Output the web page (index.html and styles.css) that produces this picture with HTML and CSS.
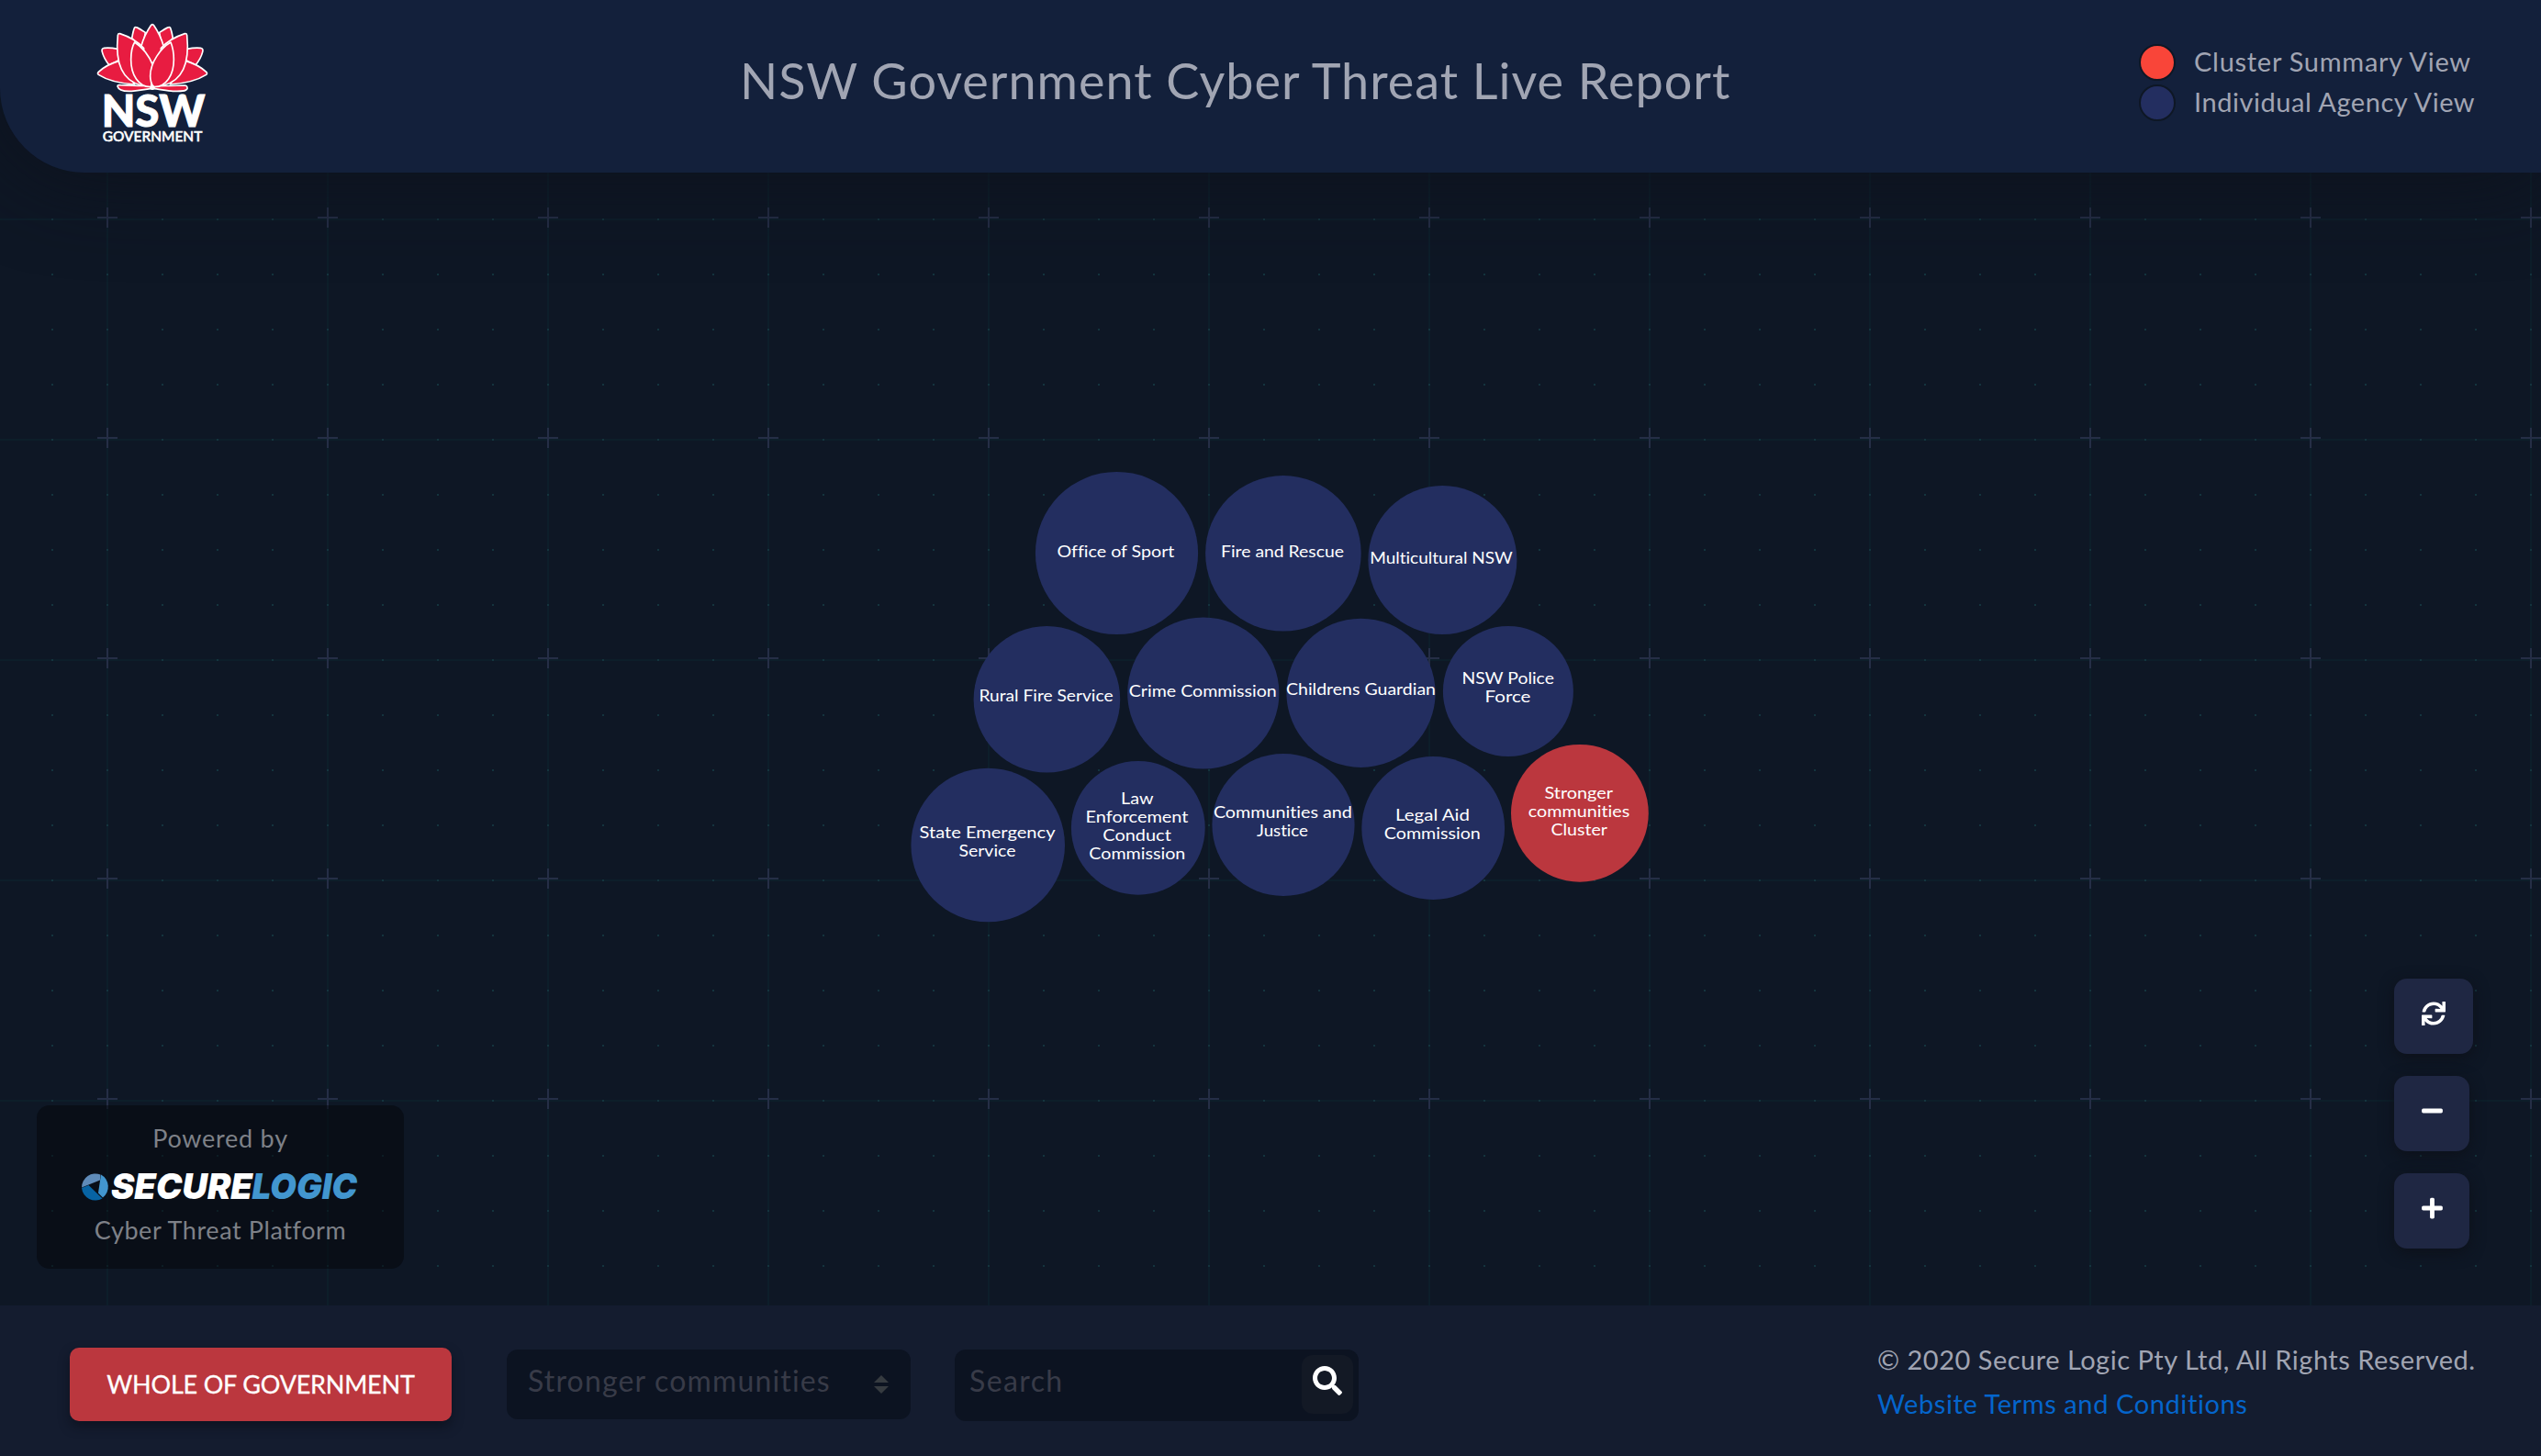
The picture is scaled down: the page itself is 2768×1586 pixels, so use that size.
FILE: index.html
```html
<!DOCTYPE html>
<html lang="en">
<head>
<meta charset="utf-8">
<title>NSW Government Cyber Threat Live Report</title>
<link rel="stylesheet" href="styles.css">
</head>
<body>
<div class="page">
  <header class="header">
    <svg class="crest" viewBox="315 75 366 390" role="img" aria-label="NSW Government">
      <g class="petals">
        <path d="M384 282C388 298 410 299 430 298C460 296 475 291 498 289C521 291 545 297 565 298C590 299 608 299 612 290C613 283 610 279 602 279Q500 284 394 278C387 277 384 279 384 282Z"/>
        <path d="M385 160C365 156 350 156 340 157C333 158 332 163 334 170C339 190 348 202 357 213L390 196Z"/>
        <path d="M611 160C631 156 646 156 656 157C663 158 664 163 662 170C657 190 648 202 639 213L606 196Z"/>
        <path d="M431 125C434 108 437 95 440 90C443 86 449 89 475 106L465 160Z"/>
        <path d="M565 125C562 108 559 95 556 90C553 86 547 89 521 106L531 160Z"/>
        <path d="M498 210L461 152C469 124 483 98 494 82Q498 78 502 82C513 98 527 124 535 152Z"/>
        <path d="M440 276C400 273 350 262 322 244Q317 240 322 235C340 218 365 206 390 199Z"/>
        <path d="M556 276C596 273 646 262 674 244Q679 240 674 235C656 218 631 206 606 199Z"/>
        <path d="M462 279C405 265 375 215 385 115Q386 109 392 110C430 122 452 138 470 158Z"/>
        <path d="M534 279C591 265 621 215 611 115Q610 109 604 110C566 122 544 138 526 158Z"/>
        <path d="M494 284C452 286 428 243 428 195C428 170 434 148 440 138C466 155 488 185 499 212Z"/>
        <path d="M502 284C544 286 568 243 568 195C568 170 562 148 558 138C525 157 491 205 491 248C491 264 496 276 502 284Z"/>
      </g>
      <circle class="petal-knot" cx="498" cy="286" r="8"/>
      <text class="crest-nsw" x="332" y="413" textLength="338" lengthAdjust="spacingAndGlyphs">NSW</text>
      <text class="crest-gov" x="335" y="461" textLength="326" lengthAdjust="spacingAndGlyphs">GOVERNMENT</text>
    </svg>
    <h1 class="title">NSW Government Cyber Threat Live Report</h1>
    <ul class="legend">
      <li class="legend-row"><span class="dot dot-cluster"></span><span class="legend-cluster">Cluster Summary View</span></li>
      <li class="legend-row"><span class="dot dot-agency"></span><span class="legend-agency">Individual Agency View</span></li>
    </ul>
  </header>

  <main class="map">
    <svg class="canvas" viewBox="0 188 2768 1234">
      <defs>
        <pattern id="grid" x="57" y="179" width="240" height="240" patternUnits="userSpaceOnUse">
          <path class="grid-line" d="M59 0h2v240h-2zM0 59h240v2H0z"/>
          <path class="grid-dot" d="M119 59h2v2h-2zM179 59h2v2h-2zM239 59h1v2h-1zM0 59h1v2H0zM59 119h2v2h-2zM59 179h2v2h-2zM59 239h2v1h-2zM59 0h2v1h-2zM119 119h2v2h-2zM119 179h2v2h-2zM179 119h2v2h-2zM179 179h2v2h-2zM239 119h1v2h-1zM0 119h1v2H0zM239 179h1v2h-1zM0 179h1v2H0zM119 239h2v1h-2zM119 0h2v1h-2zM179 239h2v1h-2zM179 0h2v1h-2zM239 239h1v1h-1zM0 0h1v1H0zM239 0h1v1h-1zM0 239h1v1H0z"/>
          <path class="grid-plus" d="M59 47h2v22h-2zM49 57h22v2H49z"/>
        </pattern>
      </defs>
      <rect x="0" y="188" width="2768" height="1234" fill="url(#grid)"/>
      <g class="agencies">
        <circle cx="1216.5" cy="602.5" r="88.6"/>
        <circle cx="1397.9" cy="602.8" r="84.8"/>
        <circle cx="1571.4" cy="610" r="81"/>
        <circle cx="1140.4" cy="761.8" r="79.8"/>
        <circle cx="1310.8" cy="755" r="82.6"/>
        <circle cx="1482.5" cy="754.8" r="81.1"/>
        <circle cx="1642.9" cy="753" r="71"/>
        <circle cx="1076.2" cy="920.5" r="83.8"/>
        <circle cx="1239.8" cy="901.8" r="72.9"/>
        <circle cx="1398" cy="898.5" r="77.6"/>
        <circle cx="1561.2" cy="902" r="77.9"/>
      </g>
      <circle class="cluster" cx="1720.9" cy="885.8" r="74.9"/>
      <g class="labels">
        <text x="1151.4" y="607" textLength="128" lengthAdjust="spacingAndGlyphs">Office of Sport</text>
        <text x="1330" y="607" textLength="134" lengthAdjust="spacingAndGlyphs">Fire and Rescue</text>
        <text x="1492.2" y="614" textLength="155.5" lengthAdjust="spacingAndGlyphs">Multicultural NSW</text>
        <text x="1066.5" y="764" textLength="146" lengthAdjust="spacingAndGlyphs">Rural Fire Service</text>
        <text x="1229.8" y="759" textLength="161" lengthAdjust="spacingAndGlyphs">Crime Commission</text>
        <text x="1401" y="757" textLength="163" lengthAdjust="spacingAndGlyphs">Childrens Guardian</text>
        <text x="1592.4" y="745" textLength="100.5" lengthAdjust="spacingAndGlyphs">NSW Police</text>
        <text x="1617.5" y="765" textLength="50" lengthAdjust="spacingAndGlyphs">Force</text>
        <text x="1001.5" y="913" textLength="148" lengthAdjust="spacingAndGlyphs">State Emergency</text>
        <text x="1044.5" y="933" textLength="62" lengthAdjust="spacingAndGlyphs">Service</text>
        <text x="1221" y="876" textLength="35.5" lengthAdjust="spacingAndGlyphs">Law</text>
        <text x="1182.5" y="896" textLength="112" lengthAdjust="spacingAndGlyphs">Enforcement</text>
        <text x="1201.3" y="916" textLength="74.5" lengthAdjust="spacingAndGlyphs">Conduct</text>
        <text x="1186.3" y="936" textLength="105" lengthAdjust="spacingAndGlyphs">Commission</text>
        <text x="1321.9" y="891" textLength="151" lengthAdjust="spacingAndGlyphs">Communities and</text>
        <text x="1369" y="911" textLength="56" lengthAdjust="spacingAndGlyphs">Justice</text>
        <text x="1520" y="894" textLength="81" lengthAdjust="spacingAndGlyphs">Legal Aid</text>
        <text x="1507.8" y="914" textLength="105" lengthAdjust="spacingAndGlyphs">Commission</text>
        <text x="1682.5" y="870" textLength="74.5" lengthAdjust="spacingAndGlyphs">Stronger</text>
        <text x="1664.8" y="890" textLength="110.5" lengthAdjust="spacingAndGlyphs">communities</text>
        <text x="1689.4" y="910" textLength="61.5" lengthAdjust="spacingAndGlyphs">Cluster</text>
      </g>
    </svg>

    <section class="powered">
      <p class="powered-by">Powered by</p>
      <svg class="securelogic" viewBox="90 1276 302 34" role="img" aria-label="SecureLogic">
        <path fill="#5f8bb9" d="M90 1293.500A15 15 0 0 1 110.500 1279.500L110 1285.500Z"/>
        <path fill="#4296cf" d="M111 1279.500A15 15 0 0 1 113 1304.500L108 1299.500Z"/>
        <path fill="#0763a3" d="M90 1294L97.500 1291L112.500 1305.500A15 15 0 0 1 90 1294Z"/>
        <text class="word-secure" x="122" y="1306" textLength="154" lengthAdjust="spacingAndGlyphs">SECURE</text>
        <text class="word-logic" x="275.500" y="1306" textLength="114.500" lengthAdjust="spacingAndGlyphs">LOGIC</text>
      </svg>
      <p class="platform">Cyber Threat Platform</p>
    </section>

    <nav class="zoom">
      <button class="tool tool-reset" aria-label="Reset"><svg width="26" height="26" viewBox="0 0 512 512"><path d="M440.650 12.570l4 82.770A247.160 247.160 0 0 0 255.830 8C134.730 8 33.910 94.920 12.290 209.820A12 12 0 0 0 24.090 224h49.050a12 12 0 0 0 11.670-9.260 175.910 175.910 0 0 1 317-56.940l-101.460-4.860a12 12 0 0 0-12.570 12v47.410a12 12 0 0 0 12 12H500a12 12 0 0 0 12-12V12a12 12 0 0 0-12-12h-47.370a12 12 0 0 0-11.980 12.570zM255.830 432a175.610 175.610 0 0 1-146-77.800l101.800 4.870a12 12 0 0 0 12.570-12v-47.400a12 12 0 0 0-12-12H12a12 12 0 0 0-12 12V500a12 12 0 0 0 12 12h47.350a12 12 0 0 0 12-12.600l-4.150-82.570A247.170 247.170 0 0 0 255.830 504c121.110 0 221.930-86.920 243.550-201.820a12 12 0 0 0-11.800-14.180h-49.050a12 12 0 0 0-11.670 9.260A175.860 175.860 0 0 1 255.830 432z"/></svg></button>
      <button class="tool" aria-label="Zoom out"><svg width="23" height="26" viewBox="0 0 448 512"><path d="M416 208H32c-17.670 0-32 14.330-32 32v32c0 17.670 14.330 32 32 32h384c17.670 0 32-14.330 32-32v-32c0-17.670-14.330-32-32-32z"/></svg></button>
      <button class="tool" aria-label="Zoom in"><svg width="23" height="26" viewBox="0 0 448 512"><path d="M416 208H272V64c0-17.670-14.330-32-32-32h-32c-17.670 0-32 14.330-32 32v144H32c-17.670 0-32 14.330-32 32v32c0 17.670 14.330 32 32 32h144v144c0 17.670 14.330 32 32 32h32c17.670 0 32-14.330 32-32V304h144c17.670 0 32-14.330 32-32v-32c0-17.670-14.330-32-32-32z"/></svg></button>
    </nav>
  </main>

  <footer class="footer">
    <button class="whole">WHOLE OF GOVERNMENT</button>
    <div class="select">
      <span>Stronger communities</span>
      <svg width="16" height="20" viewBox="0 0 16 20"><path d="M0 8L8 0l8 8zM0 12h16l-8 8z"/></svg>
    </div>
    <div class="search">
      <input class="search-input" type="text" placeholder="Search">
      <button class="search-button" aria-label="Search"><svg width="32" height="32" viewBox="0 0 512 512"><path d="M505 442.700L405.300 343c-4.500-4.500-10.600-7-17-7H372c27.600-35.300 44-79.700 44-128C416 93.100 322.900 0 208 0S0 93.100 0 208s93.100 208 208 208c48.300 0 92.700-16.400 128-44v16.300c0 6.400 2.500 12.500 7 17l99.700 99.700c9.400 9.400 24.600 9.400 33.900 0l28.300-28.300c9.400-9.400 9.400-24.600.1-34zM208 336c-70.700 0-128-57.200-128-128 0-70.700 57.200-128 128-128 70.700 0 128 57.200 128 128 0 70.700-57.200 128-128 128z"/></svg></button>
    </div>
    <div class="legal">
      <p>© 2020 Secure Logic Pty Ltd, All Rights Reserved.</p>
      <a href="#">Website Terms and Conditions</a>
    </div>
  </footer>
</div>
</body>
</html>
```
FILE: styles.css
```css
* { box-sizing: border-box; margin: 0; padding: 0; }

body {
  background: #0e1725;
  color: #a1a5b3;
  font-family: Lato, "Open Sans", sans-serif;
  font-variant-ligatures: none;
}

button { border: 0; font-family: inherit; color: #fff; cursor: pointer; }

.page {
  display: flex;
  flex-direction: column;
  width: 2768px;
  height: 1586px;
  overflow: hidden;
}

/* Header */
.header {
  position: relative;
  z-index: 1;
  display: flex;
  align-items: flex-start;
  height: 188px;
  padding: 25px 0 0 105px;
  background: #13203b;
  border-bottom-left-radius: 92px;
  box-shadow: 0 0 100px rgba(13, 17, 27, .9);
}

.crest { flex: none; width: 122px; height: 130px; overflow: visible; }
.petals { fill: #e81c41; stroke: #fff; stroke-width: 5; stroke-linejoin: round; }
.petal-knot { fill: #fff; }
.crest-nsw { font: 900 142px Lato, sans-serif; fill: #fff; stroke: #fff; stroke-width: 3; }
.crest-gov { font: 500 43px Lato, sans-serif; fill: #fff; stroke: #fff; stroke-width: 1.5; }

.title {
  margin: 30px 0 0 579px;
  font-size: 54px;
  font-weight: 400;
  line-height: 66px;
  letter-spacing: .98px;
  white-space: nowrap;
}

.legend {
  margin: 21px 72px 0 auto;
  list-style: none;
  font-size: 29px;
}
.legend-row { display: flex; align-items: center; gap: 20px; width: 366px; height: 44px; white-space: nowrap; }
.legend-cluster { padding-bottom: 3px; letter-spacing: .72px; }
.legend-agency { padding-bottom: 3px; letter-spacing: .54px; }
.dot { flex: none; width: 40px; height: 40px; border: 2px solid #0e1725; border-radius: 50%; }
.dot-cluster { background: #f94539; }
.dot-agency { background: #232e60; }

/* Map */
.map { position: relative; height: 1234px; }
.canvas { display: block; width: 2768px; height: 1234px; }
.grid-line { fill: #0d1e2a; }
.grid-dot { fill: #14343e; }
.grid-plus { fill: #252e46; }
.agencies { fill: #232e60; }
.cluster { fill: #bb373e; }
.labels { fill: #fff; font-size: 18px; }

.powered {
  position: absolute;
  left: 40px;
  bottom: 40px;
  display: flex;
  flex-direction: column;
  align-items: center;
  width: 400px;
  height: 178px;
  padding-top: 16px;
  border-radius: 14px;
  background: rgba(3, 6, 10, .5);
  color: #7e8188;
  font-size: 27px;
  line-height: 40px;
}
.powered-by { letter-spacing: .75px; }
.platform { letter-spacing: .59px; }
.securelogic { width: 302px; height: 34px; margin: 16px 0 10px; overflow: visible; }
.word-secure, .word-logic { font: italic 900 39px Inter, sans-serif; }
.word-secure { fill: #fff; }
.word-logic { fill: #4296cf; }

.zoom {
  position: absolute;
  right: 74px;
  bottom: 62px;
  display: flex;
  flex-direction: column;
  align-items: flex-start;
  gap: 24px;
}
.tool {
  display: flex;
  justify-content: center;
  width: 82px;
  height: 82px;
  padding-top: 25px;
  border-radius: 14px;
  background: #1f2743;
  box-shadow: 0 4px 16px rgba(12, 15, 22, .8);
}
.tool-reset { width: 86px; }
.tool path, .search-button path { fill: #fff; }

/* Footer */
.footer {
  display: flex;
  align-items: flex-start;
  height: 164px;
  padding: 46px 72px 0 76px;
  background: #141c2f;
}

.whole {
  width: 416px;
  height: 80px;
  padding-bottom: 1px;
  border-radius: 10px;
  background: #bb373e;
  box-shadow: 0 6px 12px rgba(10, 14, 24, .6);
  font-size: 27px;
  letter-spacing: -.2px;
  -webkit-text-stroke: .3px #fff;
}

.select {
  display: flex;
  align-items: center;
  justify-content: space-between;
  width: 440px;
  height: 76px;
  margin: 2px 0 0 60px;
  padding: 0 24px 10px 23px;
  border-radius: 12px;
  background: #0c1321;
  color: #383b48;
  font-size: 32px;
  letter-spacing: 1.16px;
}
.select svg { margin-top: 10px; fill: #363b40; }

.search {
  display: flex;
  width: 440px;
  height: 78px;
  margin: 2px 0 0 48px;
  padding: 6px 6px 0 16px;
  border-radius: 12px;
  background: #0c1321;
}
.search-input {
  flex: 1;
  min-width: 0;
  height: 54px;
  border: 0;
  outline: 0;
  background: none;
  font: 32px Lato, sans-serif;
  letter-spacing: 1.4px;
}
.search-input::placeholder { color: #383b48; }
.search-button {
  display: flex;
  justify-content: center;
  width: 56px;
  height: 64px;
  padding-top: 12px;
  border-radius: 12px;
  background: #131925;
}

.legal {
  margin: -11px 0 0 auto;
  width: 651px;
  font-size: 29px;
  line-height: 48px;
  letter-spacing: .5px;
  white-space: nowrap;
}
.legal a { color: #0465cc; letter-spacing: .6px; text-decoration: none; }
```
